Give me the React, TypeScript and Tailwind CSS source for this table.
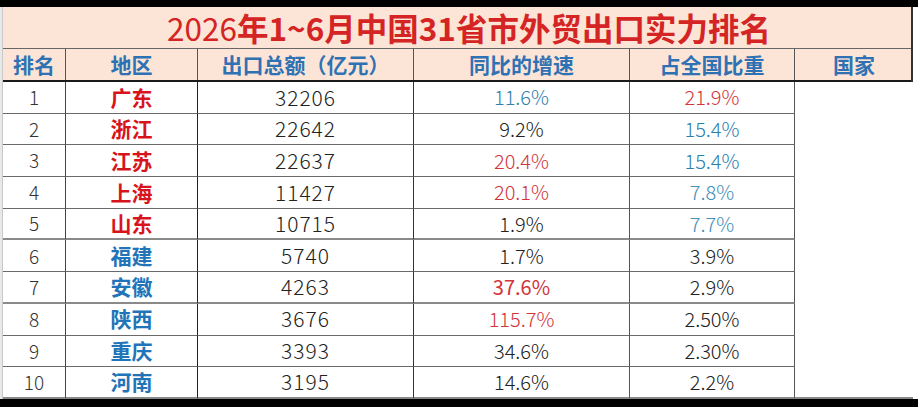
const rows = [
  { rank: "1", region: "广东", hot: true, total: "32206", growth: "11.6%", gc: "text-[#2f7fae]", share: "21.9%", sc: "text-[#d2343a]" },
  { rank: "2", region: "浙江", hot: true, total: "22642", growth: "9.2%", gc: "text-[#222]", share: "15.4%", sc: "text-[#2f7fae]" },
  { rank: "3", region: "江苏", hot: true, total: "22637", growth: "20.4%", gc: "text-[#d2343a]", share: "15.4%", sc: "text-[#2f7fae]" },
  { rank: "4", region: "上海", hot: true, total: "11427", growth: "20.1%", gc: "text-[#d2343a]", share: "7.8%", sc: "text-[#3f8fb8]" },
  { rank: "5", region: "山东", hot: true, total: "10715", growth: "1.9%", gc: "text-[#222]", share: "7.7%", sc: "text-[#3f8fb8]" },
  { rank: "6", region: "福建", hot: false, total: "5740", growth: "1.7%", gc: "text-[#222]", share: "3.9%", sc: "text-[#222]" },
  { rank: "7", region: "安徽", hot: false, total: "4263", growth: "37.6%", gc: "text-[#d2343a] !font-normal", share: "2.9%", sc: "text-[#222]" },
  { rank: "8", region: "陕西", hot: false, total: "3676", growth: "115.7%", gc: "text-[#d2343a]", share: "2.50%", sc: "text-[#222]" },
  { rank: "9", region: "重庆", hot: false, total: "3393", growth: "34.6%", gc: "text-[#222]", share: "2.30%", sc: "text-[#222]" },
  { rank: "10", region: "河南", hot: false, total: "3195", growth: "14.6%", gc: "text-[#222]", share: "2.2%", sc: "text-[#222]" },
];

const headers = ["排名", "地区", "出口总额（亿元）", "同比的增速", "占全国比重", "国家"];

export default function App() {
  return (
    <div className="w-[918px] h-[407px] bg-black flex flex-col font-['Noto_Sans_CJK_SC','Noto_Sans',sans-serif] overflow-hidden">
      <div className="h-[7px] shrink-0" />
      <div className="flex bg-white">
        <div className="w-[2px] bg-[#e8e8e8]" />
        <div className="w-[911px] border-l border-[#c8c8c8] border-r-2 border-r-[#333] flex flex-col">
          {/* title */}
          <div className="h-[42px] bg-[#fce4d6] border-b border-[#666] flex items-center justify-center text-[#d42424] text-[31.5px] leading-none pl-[24px]">
            <span className="font-normal">2026</span>
            <span className="font-bold">年1~6月中国31省市外贸出口实力排名</span>
          </div>

          {/* header */}
          <div className="h-[33px] bg-[#fce4d6] border-b-2 border-[#1a1a1a] grid grid-cols-[63px_132px_216px_216px_165px_118px]">
            {headers.map((h, i) => (
              <div
                key={h}
                className={`flex items-center justify-center text-[21px] font-bold text-[#2f72b4] leading-none ${i < 5 ? "border-r border-[#555]" : ""}`}
              >
                {h}
              </div>
            ))}
          </div>

          {/* body */}
          <div className="grid grid-cols-[63px_132px_216px_216px_165px_118px] grid-rows-[repeat(10,31.7px)]">
            {rows.map((r, i) => {
              const line = i === 9 ? "border-b-2 border-b-[#888]" : i === 4 || i === 6 ? "border-b-2 border-b-[#8a8a8a]" : "border-b border-b-[#6a6a6a]";
              return [
                <div key={`a${i}`} className={`flex items-center justify-center text-[19px] font-light text-[#333] border-r border-r-[#444] ${line}`} style={{ gridRow: i + 1, gridColumn: 1 }}>
                  {r.rank}
                </div>,
                <div key={`b${i}`} className={`flex items-center justify-center text-[21px] font-bold border-r border-r-[#222] ${r.hot ? "text-[#d7141c]" : "text-[#2274b8]"} ${line}`} style={{ gridRow: i + 1, gridColumn: 2 }}>
                  {r.region}
                </div>,
                <div key={`c${i}`} className={`flex items-center justify-center text-[21px] font-light tracking-[1px] text-[#222] border-r border-r-[#333] ${line}`} style={{ gridRow: i + 1, gridColumn: 3 }}>
                  {r.total}
                </div>,
                <div key={`d${i}`} className={`flex items-center justify-center text-[20px] font-light border-r border-r-[#555] ${r.gc} ${line}`} style={{ gridRow: i + 1, gridColumn: 4 }}>
                  {r.growth}
                </div>,
                <div key={`e${i}`} className={`flex items-center justify-center text-[20px] font-light border-r border-r-[#555] ${r.sc} ${line}`} style={{ gridRow: i + 1, gridColumn: 5 }}>
                  {r.share}
                </div>,
              ];
            })}
            <div className="col-start-6 row-start-1 row-span-10 bg-white border-b-2 border-b-[#888]" />
          </div>
        </div>
        <div className="flex-1 bg-white" />
      </div>
      <div className="flex-1 bg-black" />
    </div>
  );
}
